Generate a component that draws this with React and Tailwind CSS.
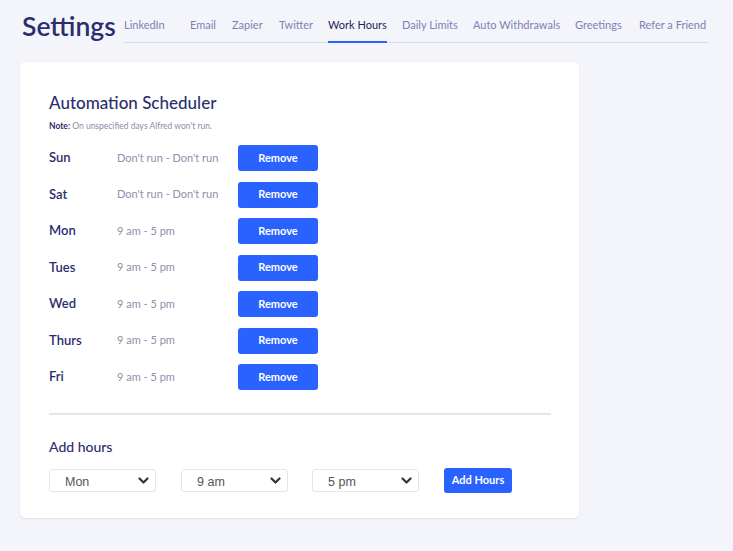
import React from "react";

const tabs = [
  ["LinkedIn", "w-[66px]"],
  ["Email", "w-[42px]"],
  ["Zapier", "w-[47px]"],
  ["Twitter", "w-[49px]"],
  ["Work Hours", "w-[74px]"],
  ["Daily Limits", "w-[71px]"],
  ["Auto Withdrawals", "w-[102px]"],
  ["Greetings", "w-[64px]"],
  ["Refer a Friend", "flex-1"],
];
const rows = [
  ["Sun", "Don't run - Don't run"],
  ["Sat", "Don't run - Don't run"],
  ["Mon", "9 am - 5 pm"],
  ["Tues", "9 am - 5 pm"],
  ["Wed", "9 am - 5 pm"],
  ["Thurs", "9 am - 5 pm"],
  ["Fri", "9 am - 5 pm"],
];

function Chevron() {
  return (
    <svg width="11" height="8" viewBox="0 0 11 8" className="shrink-0">
      <path d="M1.5 1.5 L5.5 5.5 L9.5 1.5" fill="none" stroke="#333" strokeWidth="2.2" strokeLinecap="round" strokeLinejoin="round" />
    </svg>
  );
}

function Select({ value, w }) {
  return (
    <div className={`${w} h-[23px] flex items-center justify-between border border-[#e3e5ec] rounded-[3px] bg-white pl-[15px] pr-[6px]`}>
      <span className="text-[12.5px] leading-[14px] pt-[2px] text-[#555] font-['Liberation_Sans',Arial,sans-serif]">{value}</span>
      <Chevron />
    </div>
  );
}

export default function App() {
  return (
    <div className="min-h-[551px] w-[733px] bg-[#f4f5fa] font-['Lato','Open_Sans',sans-serif] px-[20px] pb-[33px]">
      <div className="flex items-start">
        <div className="pl-[2px] pt-[9px] text-[26.5px] leading-[34px] text-[#2b2e6e] font-semibold w-[104px] whitespace-nowrap">Settings</div>
        <nav className="flex border-b border-[#d9dbe4] pt-[17px] w-[584px] whitespace-nowrap">
          {tabs.map(([t, w]) => (
            <div key={t} className={`${w} shrink-0 text-[11px] leading-[16px]`}>
              <span
                className={`inline-block ${t === "Work Hours" ? "text-[#1f2358] border-b-2 border-[#2962ff] mb-[-1px] pb-[8px]" : "text-[#7c80b7] pb-[9px]"}`}
              >
                {t}
              </span>
            </div>
          ))}
        </nav>
      </div>

      <div className="mt-[19px] w-[559px] bg-white rounded-[5px] shadow-[0_1px_2px_rgba(30,40,90,0.10)] pl-[29px] pr-[28px] pt-[30px] pb-[25px]">
        <div className="text-[17px] leading-[22px] text-[#2b2e6e] font-medium">Automation Scheduler</div>
        <div className="text-[8.5px] leading-[12px] mt-[6px] text-[#8a8caa]">
          <span className="text-[#2b2e6e] font-bold">Note:</span> On unspecified days Alfred won't run.
        </div>
        <div className="mt-[13px] flex flex-col gap-[10.5px]">
          {rows.map(([d, t]) => (
            <div key={d} className="flex items-center h-[26px]">
              <div className="w-[68px] text-[13px] font-semibold text-[#2b2e6e]">{d}</div>
              <div className="w-[121px] text-[11px] text-[#8e90ad]">{t}</div>
              <button className="w-[80px] h-[26px] rounded-[3px] bg-[#2962ff] text-white text-[11px] font-bold">Remove</button>
            </div>
          ))}
        </div>
        <div className="mt-[23px] h-[2px] bg-[#e4e5ec]"></div>
        <div className="mt-[23px] text-[14px] leading-[18px] text-[#2b2e6e] font-medium">Add hours</div>
        <div className="mt-[12px] flex items-center">
          <Select value="Mon" w="w-[107px]" />
          <div className="w-[25px]" />
          <Select value="9 am" w="w-[107px]" />
          <div className="w-[24px]" />
          <Select value="5 pm" w="w-[107px]" />
          <div className="w-[25px]" />
          <button className="w-[68px] h-[25px] rounded-[3px] bg-[#2962ff] text-white text-[11px] font-bold">Add Hours</button>
        </div>
      </div>
    </div>
  );
}
